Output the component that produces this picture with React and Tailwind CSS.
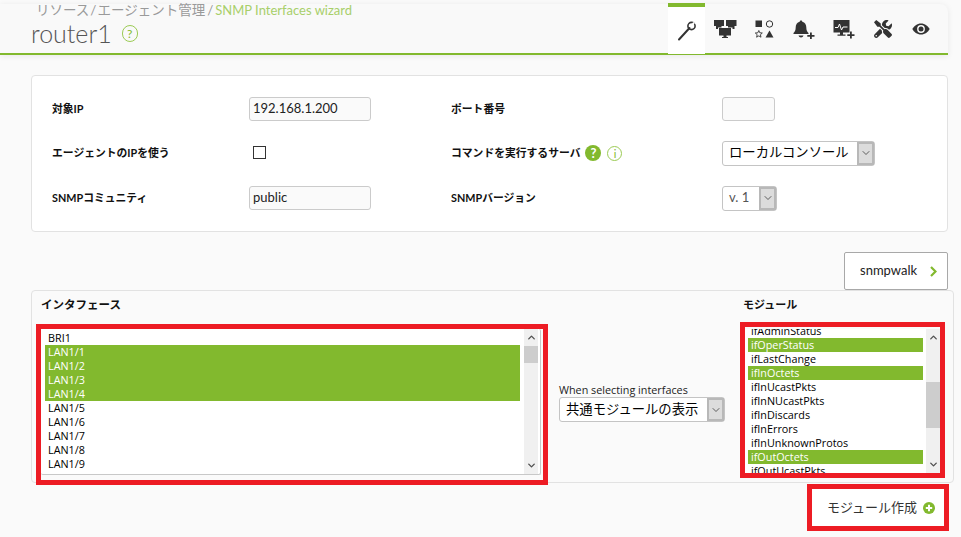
import React from "react";
import { FaTools } from "react-icons/fa";
import { ChevronDown, ChevronUp } from "lucide-react";

const latin = "font-['Lato','Noto_Sans_CJK_JP',sans-serif]";
const openSans = "font-['Open_Sans','Noto_Sans_CJK_JP',sans-serif]";

const interfaces = [
  { name: "BRI1" },
  { name: "LAN1/1", on: true },
  { name: "LAN1/2", on: true },
  { name: "LAN1/3", on: true },
  { name: "LAN1/4", on: true },
  { name: "LAN1/5" },
  { name: "LAN1/6" },
  { name: "LAN1/7" },
  { name: "LAN1/8" },
  { name: "LAN1/9" },
];

const modules = [
  { name: "ifAdminStatus" },
  { name: "ifOperStatus", on: true },
  { name: "ifLastChange" },
  { name: "ifInOctets", on: true },
  { name: "ifInUcastPkts" },
  { name: "ifInNUcastPkts" },
  { name: "ifInDiscards" },
  { name: "ifInErrors" },
  { name: "ifInUnknownProtos" },
  { name: "ifOutOctets", on: true },
  { name: "ifOutUcastPkts" },
];

const WrenchIcon = () => (
  <svg width="20" height="20" viewBox="0 0 20 20" fill="none">
    <path d="M2 18.500 L12.500 7" stroke="#333" strokeWidth="2" strokeLinecap="round" />
    <circle cx="14.500" cy="5" r="3.600" stroke="#333" strokeWidth="1.600" />
    <path d="M14.500 5 L17 1.500" stroke="#fff" strokeWidth="2" />
  </svg>
);

const NetworkIcon = () => (
  <svg width="24" height="18" viewBox="0 0 24 18" fill="#333">
    <path d="M1 0h10v6H8.500v1.500H5V9H3V6H1z" />
    <path d="M13 0h10.500v6H21.500v3h-2V7.500H15V6h-2z" />
    <path d="M6 8h12v7.500h-4.500V17H15v1H9v-1h1.500v-1.500H6z" />
  </svg>
);

const ShapesIcon = () => (
  <svg width="20" height="18" viewBox="0 0 20 18">
    <rect x="0.500" y="0.500" width="6.500" height="6.500" fill="#333" />
    <circle cx="14.500" cy="4" r="3.200" fill="none" stroke="#333" strokeWidth="1" />
    <path d="M3.800 10.500l1 2.300 2.500.2-1.900 1.700.6 2.500-2.200-1.300-2.200 1.300.6-2.500L.3 13l2.500-.2z" fill="none" stroke="#333" strokeWidth="0.900" />
    <path d="M14.500 10.500l4 7h-8z" fill="#333" />
  </svg>
);

const BellPlusIcon = () => (
  <svg width="22" height="19" viewBox="0 0 22 19" fill="#333">
    <path d="M8 0.500c.8 0 1.300.5 1.300 1.200 2.700.6 4 2.800 4 5.600 0 3 .8 4.300 2.200 5.700v1H.5v-1C1.900 11.600 2.700 10.300 2.700 7.300c0-2.800 1.300-5 4-5.600C6.700 1 7.200.5 8 .5z" />
    <path d="M5.500 15.500h5c-.3 1.300-1.300 2-2.500 2s-2.200-.7-2.500-2z" />
    <path d="M17 12.500h1.800v2.500h2.700v1.700h-2.700v2.300H17v-2.300h-2.700V15H17z" />
  </svg>
);

const MonitorPlusIcon = () => (
  <svg width="22" height="19" viewBox="0 0 22 19">
    <rect x="0.500" y="0" width="16" height="12.500" fill="#333" />
    <path d="M2 7.500h3l1.500-3.500 2 6 1.500-3h4.500" fill="none" stroke="#fff" strokeWidth="1" />
    <path d="M7 12h3v2.500h2.500v1.200H4.500v-1.200H7z" fill="#333" />
    <path d="M17 11.500h1.800v2.700h2.700v1.700h-2.700v2.600H17v-2.600h-2.700v-1.700H17z" fill="#333" />
  </svg>
);

const EyeIcon = () => (
  <svg width="18" height="12" viewBox="0 0 18 12">
    <path d="M9 .5C5 .5 2 3 .3 6 2 9 5 11.500 9 11.500S16 9 17.700 6C16 3 13 .5 9 .5z" fill="#333" />
    <circle cx="9" cy="6" r="3.900" fill="#fafafa" />
    <circle cx="9" cy="6" r="2.500" fill="#333" />
  </svg>
);

const SelectBox = ({ label, widthClass, textClass }) => (
  <div className={`flex h-[25px] ${widthClass} items-stretch rounded-[3px] border border-[#c4c4c4] bg-white`}>
    <div className={`flex flex-1 items-center pl-[6px] ${textClass}`}>{label}</div>
    <div className="flex w-[17px] items-center justify-center border-2 border-[#b8b8b8] bg-[#dcdcdc]">
      <ChevronDown size={12} color="#333" strokeWidth={1.500} />
    </div>
  </div>
);

const ListRow = ({ item }) => (
  <div className={`h-[14px] pl-[3px] text-[10.800px] leading-[14px] ${item.on ? "bg-[#82b92e] text-white" : "text-black"}`}>
    {item.name}
  </div>
);

const Scrollbar = ({ thumbClass }) => (
  <div className="flex h-full w-[14px] flex-col items-center bg-[#f0f0f0]">
    <div className="flex h-[17px] items-center">
      <ChevronUp size={11} color="#505050" strokeWidth={3} />
    </div>
    <div className={`w-full bg-[#cdcdcd] ${thumbClass}`} />
    <div className="mt-auto flex h-[17px] items-center">
      <ChevronDown size={11} color="#505050" strokeWidth={3} />
    </div>
  </div>
);

const TextInput = ({ value, widthClass }) => (
  <div className={`flex h-[24px] ${widthClass} items-center rounded-[3px] border border-[#cbcbcb] bg-[#fafafa] pl-[3px] text-[13px] text-[#222] ${latin}`}>
    {value}
  </div>
);

const FieldLabel = ({ children }) => (
  <span className="text-[10.800px] font-bold text-[#111]">{children}</span>
);

export default function App() {
  return (
    <div className={`h-[537px] w-[961px] overflow-hidden bg-[#fafafa] ${latin}`}>
      {/* Header */}
      <div className="mt-[4px] flex h-[51px] w-[948px] justify-between rounded-tr-[8px] border-b-2 border-[#82b92e] bg-[#f9f9f9] shadow-[0_1px_6px_rgba(0,0,0,0.08)]">
        <div className="pl-[31px]">
          <div className="h-[12px] pl-[5px] text-[13.500px] leading-[12px] whitespace-nowrap text-[#9a9a9a]">
            リソース<span className="mx-px">/</span>エージェント管理<span className="mx-[2px]">/</span>
            <span className="text-[13px] text-[#a8cf6a]">SNMP Interfaces wizard</span>
          </div>
          <div className="mt-[2px] flex items-center">
            <span className="text-[25px] leading-[31px] font-light text-[#555]">router1</span>
            <span className="ml-[10px] flex h-[17px] w-[16px] items-center justify-center rounded-full border-[1.500px] border-[#9ccb55] text-[12px] leading-none text-[#82b92e]">?</span>
          </div>
        </div>
        <div className="flex items-start pr-[9px]">
          <div className="-mt-px flex h-[51px] w-[37px] items-center justify-center border-t-4 border-[#82b92e] bg-white">
            <WrenchIcon />
          </div>
          <div className="ml-[1px] flex h-[50px] w-[38px] items-center justify-center"><NetworkIcon /></div>
          <div className="flex h-[50px] w-[41px] items-center justify-center"><ShapesIcon /></div>
          <div className="flex h-[50px] w-[38px] items-center justify-center"><BellPlusIcon /></div>
          <div className="flex h-[50px] w-[41px] items-center justify-center"><MonitorPlusIcon /></div>
          <div className="flex h-[50px] w-[38px] items-center justify-center"><FaTools size={18} color="#333" /></div>
          <div className="flex h-[50px] w-[37px] items-center justify-center"><EyeIcon /></div>
        </div>
      </div>

      {/* Settings form */}
      <div className="mt-[20px] ml-[31px] grid h-[157px] w-[917px] grid-cols-[197px_202px_271px_1fr] grid-rows-[44px_44px_46px] items-center rounded-[4px] border border-[#e2e2e2] bg-white pt-[11px] pl-[20px]">
        <FieldLabel>対象IP</FieldLabel>
        <TextInput value="192.168.1.200" widthClass="w-[122px]" />
        <FieldLabel>ポート番号</FieldLabel>
        <TextInput value="" widthClass="w-[53px]" />

        <FieldLabel>エージェントのIPを使う</FieldLabel>
        <div className="-mt-px ml-[4px] h-[13px] w-[13px] border border-[#333] bg-white" />
        <div className="flex items-center">
          <FieldLabel>コマンドを実行するサーバ</FieldLabel>
          <span className="ml-[5px] flex h-[16px] w-[16px] items-center justify-center rounded-full bg-[#82b92e] text-[13px] leading-none font-bold text-white">?</span>
          <span className="ml-[6px] flex h-[15px] w-[15px] items-center justify-center rounded-full border border-[#9ccb55] text-[11px] leading-none text-[#82b92e]">i</span>
        </div>
        <SelectBox label="ローカルコンソール" widthClass="w-[153px]" textClass="text-[13.330px] text-black" />

        <FieldLabel>SNMPコミュニティ</FieldLabel>
        <TextInput value="public" widthClass="w-[122px]" />
        <FieldLabel>SNMPバージョン</FieldLabel>
        <SelectBox label="v. 1" widthClass="w-[55px]" textClass="text-[13px] text-[#555]" />
      </div>

      {/* snmpwalk */}
      <div className="mt-[20px] flex w-[948px] justify-end">
        <button className="flex h-[38px] w-[104px] items-center rounded-[2px] border border-[#a8a8a8] bg-white pl-[15px] text-[13px] text-[#222]">
          snmpwalk
          <svg className="ml-[13px]" width="7" height="11" viewBox="0 0 7 11" fill="none">
            <path d="M1 1l4.500 4.500L1 10" stroke="#82b92e" strokeWidth="2.200" />
          </svg>
        </button>
      </div>

      {/* Interfaces / modules */}
      <div className={`ml-[31px] flex h-[193px] w-[923px] items-start rounded-[4px] border border-[#e2e2e2] pl-[4px] ${openSans}`}>
        <div>
          <div className="flex h-[33px] items-center pb-[5px] pl-[5px] text-[11.500px] font-bold text-[#111]">インタフェース</div>
          <div className="flex h-[161px] w-[512px] border-[5px] border-[#ed1c24]">
            <div className="mb-[5px] flex h-[146px] w-[500px] justify-between rounded-[2px] border-r border-b border-[#c8c8c8] bg-white pr-[2px]">
              <div className="w-[479px] pt-[2px] pl-[4px]">
                {interfaces.map((item) => (
                  <ListRow key={item.name} item={item} />
                ))}
              </div>
              <Scrollbar thumbClass="h-[17px]" />
            </div>
          </div>
        </div>

        <div className="mt-[91px] ml-[11px] w-[166px]">
          <div className="h-[15px] text-[10.800px] leading-[15px] text-[#222]">When selecting interfaces</div>
          <SelectBox label="共通モジュールの表示" widthClass="w-[166px]" textClass="pl-[2px] text-[13.330px] text-black" />
        </div>

        <div className="ml-[15px]">
          <div className="flex h-[31px] items-center pb-[2px] pl-[3px] text-[11px] font-bold text-[#111]">モジュール</div>
          <div className="h-[156px] w-[205px] border-[5px] border-[#ed1c24] pt-[2px]">
            <div className="flex h-[144px] bg-white">
              <div className="h-full w-[182px] overflow-hidden pr-[3px] pl-[3px]">
                <div className="-mt-[5px]">
                  {modules.map((item) => (
                    <ListRow key={item.name} item={item} />
                  ))}
                </div>
              </div>
              <Scrollbar thumbClass="mt-[36px] h-[46px]" />
            </div>
          </div>
        </div>
      </div>

      {/* Create module */}
      <div className="mt-[1px] flex w-[949px] justify-end">
        <button className="flex h-[47px] w-[142px] items-center border-[5px] border-[#ed1c24] bg-white pl-[15px] text-[13px] text-[#333]">
          モジュール作成
          <svg className="ml-[6px]" width="12" height="12" viewBox="0 0 12 12">
            <circle cx="6" cy="6" r="6" fill="#82b92e" />
            <path d="M6 2.800v6.400M2.800 6h6.400" stroke="#fff" strokeWidth="2" />
          </svg>
        </button>
      </div>
    </div>
  );
}
